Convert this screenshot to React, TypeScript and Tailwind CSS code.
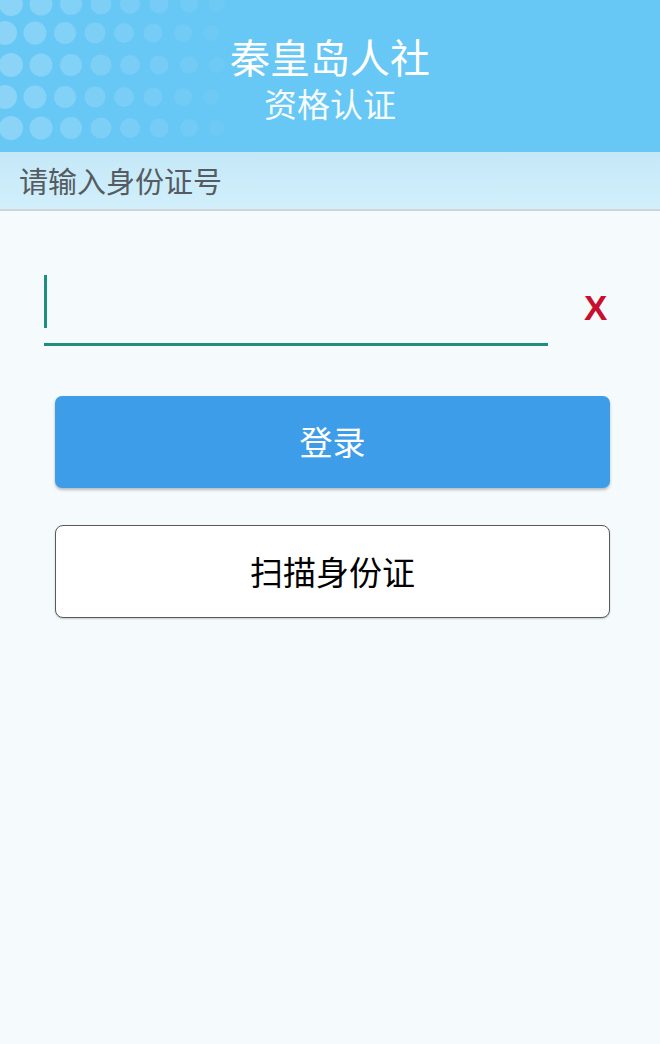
import React from "react";

const cols = [
  { x: 8, r: 12, o: 0.24 },
  { x: 38, r: 11.5, o: 0.21 },
  { x: 68, r: 11, o: 0.18 },
  { x: 98, r: 10.5, o: 0.15 },
  { x: 127, r: 10, o: 0.12 },
  { x: 156, r: 9.5, o: 0.1 },
  { x: 186, r: 9, o: 0.07 },
  { x: 214, r: 8, o: 0.05 },
];
const rows = [4, 33, 65, 97, 128];

function Dots() {
  return (
    <svg width="240" height="152" viewBox="0 0 240 152" className="block">
      {rows.map((y, ri) =>
        cols.map((c, ci) => (
          <circle
            key={`${ri}-${ci}`}
            cx={c.x + (ri % 2 ? -3 : 3)}
            cy={y}
            r={c.r}
            fill="#ffffff"
            fillOpacity={c.o}
          />
        ))
      )}
    </svg>
  );
}

export default function App() {
  const font = "font-['Noto_Sans_CJK_SC','Noto_Sans',sans-serif]";
  return (
    <div className={`w-[660px] h-[1044px] bg-[#f5fafd] ${font} flex flex-col`}>
      <div className="relative h-[152px] bg-[#67c7f5] flex flex-col items-center overflow-hidden">
        <div className="absolute left-0 top-0">
          <Dots />
        </div>
        <div className="relative mt-[30px] text-[40px] leading-[52px] text-white">秦皇岛人社</div>
        <div className="relative text-[33px] leading-[42px] text-white/95">资格认证</div>
      </div>
      <div className="h-[59px] bg-gradient-to-b from-[#c4e8f8] to-[#d2effb] border-b-2 border-[#cbd5d9] flex items-center pl-[19px]">
        <span className="text-[29px] text-[#555b60]">请输入身份证号</span>
      </div>
      <div className="flex flex-col pt-[64px]">
        <div className="flex items-end pl-[44px]">
          <div className="w-[504px] h-[71px] border-b-[3px] border-[#1e8e80] flex items-start">
            <div className="w-[3px] h-[53px] bg-[#1e8e80]" />
          </div>
          <div className="ml-[36px] mb-[18px] font-['Liberation_Sans',sans-serif] font-bold text-[35px] leading-[40px] text-[#c8102e]">
            X
          </div>
        </div>
        <div className="px-[55px] mt-[50px] flex flex-col gap-[37px] w-[665px]">
          <button className="h-[92px] w-full rounded-[7px] bg-[#3d9de9] shadow-[0_2px_3px_rgba(0,0,0,0.25)] text-white text-[33px]">
            登录
          </button>
          <button className="h-[93px] w-full rounded-[8px] bg-white border border-[#5a5a5a] shadow-[0_1px_2px_rgba(0,0,0,0.2)] text-black text-[33px]">
            扫描身份证
          </button>
        </div>
      </div>
    </div>
  );
}
